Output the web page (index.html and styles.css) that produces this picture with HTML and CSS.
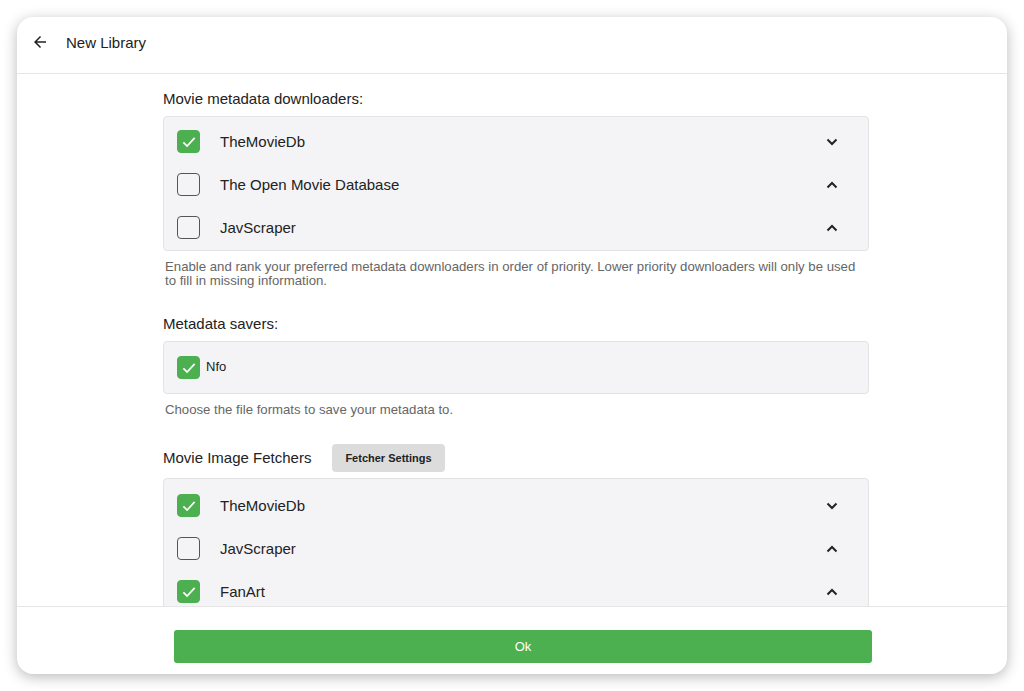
FILE: index.html
```html
<!DOCTYPE html>
<html lang="en">
<head>
<meta charset="utf-8">
<title>New Library</title>
<link rel="stylesheet" href="styles.css">
</head>
<body>
<div class="dialog">
	<div class="dialog-header">
		<button class="back-button">
			<svg width="18" height="18" viewBox="0 0 24 24"><path d="M20 11H7.83l5.59-5.59L12 4l-8 8 8 8 1.41-1.41L7.83 13H20v-2z" fill="#222"/></svg>
		</button>
		<h2 class="dialog-title">New Library</h2>
	</div>
	<div class="dialog-content">
		<div class="column">
			<h3 class="section-title">Movie metadata downloaders:</h3>
			<div class="check-list">
				<div class="check-row">
					<span class="checkbox checked"><svg width="18" height="18" viewBox="0 0 24 24"><path d="M4.5 12.5l5 5 10-11" fill="none" stroke="#fff" stroke-width="2.2"/></svg></span>
					<span class="row-name">TheMovieDb</span>
					<span class="chevron down"><svg width="12" height="8" viewBox="0 0 12 8"><path d="M1.5 1.5l4.5 4.5 4.5-4.5" fill="none" stroke="#222" stroke-width="2"/></svg></span>
				</div>
				<div class="check-row">
					<span class="checkbox"></span>
					<span class="row-name">The Open Movie Database</span>
					<span class="chevron"><svg width="12" height="8" viewBox="0 0 12 8"><path d="M1.5 6.5l4.5-4.5 4.5 4.5" fill="none" stroke="#222" stroke-width="2"/></svg></span>
				</div>
				<div class="check-row">
					<span class="checkbox"></span>
					<span class="row-name">JavScraper</span>
					<span class="chevron"><svg width="12" height="8" viewBox="0 0 12 8"><path d="M1.5 6.5l4.5-4.5 4.5 4.5" fill="none" stroke="#222" stroke-width="2"/></svg></span>
				</div>
			</div>
			<p class="field-help">Enable and rank your preferred metadata downloaders in order of priority. Lower priority downloaders will only be used to fill in missing information.</p>

			<h3 class="section-title">Metadata savers:</h3>
			<div class="check-list saver-list">
				<div class="saver-row">
					<span class="checkbox checked"><svg width="18" height="18" viewBox="0 0 24 24"><path d="M4.5 12.5l5 5 10-11" fill="none" stroke="#fff" stroke-width="2.2"/></svg></span>
					<span class="saver-name">Nfo</span>
				</div>
			</div>
			<p class="field-help">Choose the file formats to save your metadata to.</p>

			<div class="section-head">
				<h3 class="section-title inline">Movie Image Fetchers</h3>
				<button class="small-button">Fetcher Settings</button>
			</div>
			<div class="check-list fetcher-list">
				<div class="check-row">
					<span class="checkbox checked"><svg width="18" height="18" viewBox="0 0 24 24"><path d="M4.5 12.5l5 5 10-11" fill="none" stroke="#fff" stroke-width="2.2"/></svg></span>
					<span class="row-name">TheMovieDb</span>
					<span class="chevron"><svg width="12" height="8" viewBox="0 0 12 8"><path d="M1.5 1.5l4.5 4.5 4.5-4.5" fill="none" stroke="#222" stroke-width="2"/></svg></span>
				</div>
				<div class="check-row">
					<span class="checkbox"></span>
					<span class="row-name">JavScraper</span>
					<span class="chevron"><svg width="12" height="8" viewBox="0 0 12 8"><path d="M1.5 6.5l4.5-4.5 4.5 4.5" fill="none" stroke="#222" stroke-width="2"/></svg></span>
				</div>
				<div class="check-row">
					<span class="checkbox checked"><svg width="18" height="18" viewBox="0 0 24 24"><path d="M4.5 12.5l5 5 10-11" fill="none" stroke="#fff" stroke-width="2.2"/></svg></span>
					<span class="row-name">FanArt</span>
					<span class="chevron"><svg width="12" height="8" viewBox="0 0 12 8"><path d="M1.5 6.5l4.5-4.5 4.5 4.5" fill="none" stroke="#222" stroke-width="2"/></svg></span>
				</div>
			</div>
		</div>
	</div>
	<div class="dialog-footer">
		<button class="ok-button">Ok</button>
	</div>
</div>
</body>
</html>
```

FILE: styles.css
```css
html, body {
	margin: 0;
	padding: 0;
	background: #fff;
}
body {
	padding: 17px;
	font-family: "Liberation Sans", Arial, sans-serif;
	color: #222;
}
.dialog {
	width: 990px;
	height: 657px;
	background: #fff;
	border-radius: 16px;
	box-shadow: 0 3px 14px rgba(0, 0, 0, 0.28);
	display: flex;
	flex-direction: column;
	overflow: hidden;
}
.dialog-header {
	height: 50px;
	padding-bottom: 6px;
	flex: none;
	display: flex;
	align-items: center;
	border-bottom: 1px solid #e6e6e6;
}
.back-button {
	background: none;
	border: 0;
	padding: 0;
	margin: 0 17px 0 14px;
	width: 18px;
	height: 18px;
	display: flex;
}
.dialog-title {
	margin: 0;
	font-size: 15px;
	font-weight: normal;
	color: #222;
}
.dialog-content {
	flex: 1;
	overflow: hidden;
}
.column {
	width: 706px;
	margin-left: 146px;
	padding-top: 16px;
}
.section-title {
	margin: 0 0 8px 0;
	font-size: 15px;
	font-weight: normal;
	line-height: 18px;
	color: #222;
}
.section-title.inline {
	margin: 0;
}
.section-head {
	display: flex;
	align-items: center;
	gap: 21px;
	margin-bottom: 6px;
}
.small-button {
	background: #dcdcdc;
	border: 0;
	border-radius: 4px;
	height: 28px;
	padding: 0 13px;
	font-family: "Liberation Sans", Arial, sans-serif;
	font-size: 11px;
	font-weight: bold;
	color: #222;
}
.check-list {
	background: #f4f4f6;
	border: 1px solid #e3e3e6;
	border-radius: 4px;
	padding: 3px 0 1px 0;
}
.fetcher-list {
	padding-top: 5px;
}
.check-row {
	height: 43px;
	display: flex;
	align-items: center;
	padding: 0 30px 0 13px;
}
.checkbox {
	width: 21px;
	height: 21px;
	border: 1.2px solid #555;
	border-radius: 4px;
	box-sizing: content-box;
	display: flex;
	align-items: center;
	justify-content: center;
	flex: none;
}
.checkbox.checked {
	background: #4caf50;
	border-color: #4caf50;
}
.row-name {
	margin-left: 20px;
	font-size: 15px;
	flex: 1;
	color: #222;
}
.chevron {
	display: flex;
	width: 12px;
}
.saver-list {
	padding: 0;
}
.saver-row {
	height: 51px;
	display: flex;
	align-items: center;
	padding-left: 13px;
}
.saver-name {
	margin-left: 6px;
	font-size: 13px;
	margin-top: -3px;
}
.field-help {
	margin: 9px 0 27px 2px;
	font-size: 13.2px;
	line-height: 14px;
	color: #666;
	padding-right: 10px;
}
.dialog-footer {
	height: 68px;
	flex: none;
	border-top: 1px solid #e6e6e6;
	display: flex;
	align-items: flex-start;
	padding-left: 157px;
	padding-top: 23px;
	box-sizing: border-box;
}
.ok-button {
	width: 698px;
	height: 33px;
	background: #4caf50;
	border: 0;
	border-radius: 3px;
	color: #fff;
	font-family: "Liberation Sans", Arial, sans-serif;
	font-size: 13px;
}
```
